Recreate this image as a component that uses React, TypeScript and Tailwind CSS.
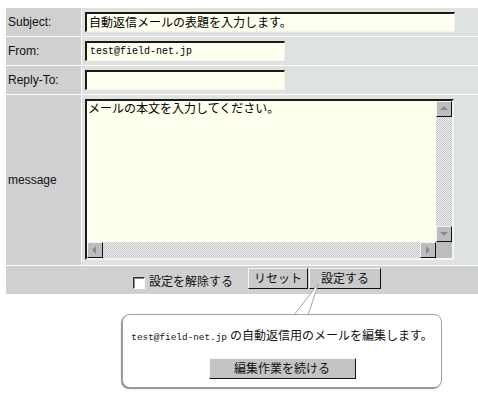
import React from "react";

const CJK = "font-['Liberation_Sans','Noto_Sans_CJK_JP',sans-serif]";
const MONO = "font-['Liberation_Mono','DejaVu_Sans_Mono',monospace]";

function Arrow({ dir }: { dir: "up" | "down" | "left" | "right" }) {
  const pts: Record<string, string> = {
    up: "4,9 8,5 12,9",
    down: "4,6 8,10 12,6",
    left: "9,4 5,8 9,12",
    right: "6,4 10,8 6,12",
  };
  return (
    <div className="w-[16px] h-[16px] shrink-0 bg-[#bdbdbd] border-t border-l border-t-[#f4f4f4] border-l-[#f4f4f4] border-r border-b border-r-[#111] border-b-[#111] flex items-center justify-center">
      <svg width="14" height="14" viewBox="1 1 14 14">
        <polygon points={pts[dir]} fill="#8a8a8a" />
      </svg>
    </div>
  );
}

const checker =
  "bg-[repeating-conic-gradient(#c4c4c4_0_25%,#f2f2f2_0_50%)] bg-[length:2px_2px]";

function Label({ children, tall }: { children: React.ReactNode; tall?: boolean }) {
  return (
    <div
      className={`bg-[#d0d0d0] flex items-center pl-[2px] text-[12px] text-[#111] ${
        tall ? "h-[170px]" : "h-[28px]"
      }`}
    >
      {children}
    </div>
  );
}

const inputCls =
  "h-[20px] bg-[#ffffef] border-t-2 border-l-2 border-t-[#1a1a1a] border-l-[#1a1a1a] border-r border-b border-r-[#f4f4f4] border-b-[#f4f4f4] flex items-center pl-[2px] outline-none";

export default function App() {
  return (
    <div className={`relative w-[478px] h-[404px] bg-white overflow-hidden ${CJK}`}>
      <div className="ml-[6px] pt-[8px] w-[472px] grid grid-cols-[75px_1fr] gap-px bg-white">
        <Label>Subject:</Label>
        <div className="bg-[#dfe3df] flex items-center pl-[3px]">
          <div className={`${inputCls} w-[370px] text-[12px] text-black`}>
            自動返信メールの表題を入力します。
          </div>
        </div>

        <Label>From:</Label>
        <div className="bg-[#dfe3df] flex items-center pl-[3px]">
          <div className={`${inputCls} w-[200px] text-[10px] text-black ${MONO} pl-[3px]`}>
            test@field-net.jp
          </div>
        </div>

        <Label>Reply-To:</Label>
        <div className="bg-[#dfe3df] flex items-center pl-[3px]">
          <div className={`${inputCls} w-[200px]`}></div>
        </div>

        <Label tall>message</Label>
        <div className="bg-[#dfe3df] flex items-start pl-[3px] pt-[4px]">
          <div className="w-[369px] h-[161px] flex flex-col bg-[#ffffef] border-t-2 border-l-2 border-t-[#1a1a1a] border-l-[#1a1a1a] border-r-2 border-b-2 border-r-[#f4f4f4] border-b-[#f4f4f4]">
            <div className="flex flex-1 min-h-0">
              <div className="flex-1 pl-[1px] pt-[1px] text-[12px] leading-[14px] text-black">
                メールの本文を入力してください。
              </div>
              <div className="w-[16px] flex flex-col">
                <Arrow dir="up" />
                <div className={`flex-1 ${checker}`} />
                <Arrow dir="down" />
              </div>
            </div>
            <div className="h-[16px] flex">
              <Arrow dir="left" />
              <div className={`flex-1 ${checker}`} />
              <Arrow dir="right" />
              <div className="w-[16px] bg-[#bdbdbd]" />
            </div>
          </div>
        </div>

        <div className="col-span-2 h-[28px] bg-[#d0d0d0] flex items-end pb-[5px] pl-[127px]">
          <div className="w-[12px] h-[12px] bg-white border-t border-l border-t-[#333] border-l-[#333] border-r border-b border-r-white border-b-white shadow-[inset_1px_1px_0_#888]" />
          <span className="ml-[4px] text-[12px] leading-[13px] text-[#111]">設定を解除する</span>
          <div className="ml-[15px] w-[60px] h-[21px] bg-[#cacaca] border-t border-l border-t-[#f4f4f4] border-l-[#f4f4f4] border-r border-b border-r-[#111] border-b-[#111] flex items-center justify-center text-[12px] text-[#111]">
            リセット
          </div>
          <div className="ml-[1px] w-[72px] h-[21px] bg-[#cacaca] border-t border-l border-t-[#f4f4f4] border-l-[#f4f4f4] border-r border-b border-r-[#111] border-b-[#111] flex items-center justify-center text-[12px] text-[#111]">
            設定する
          </div>
        </div>
      </div>

      {/* balloon tail */}
      <svg className="absolute left-0 top-0" width="478" height="404">
        <polygon points="294,316 318,284 308,316" fill="#fff" />
        <line x1="294" y1="315" x2="318" y2="284" stroke="#a8a8a8" strokeWidth="1" />
        <line x1="308" y1="315" x2="318.5" y2="284" stroke="#a8a8a8" strokeWidth="1" />
      </svg>

      {/* balloon */}
      <div className="absolute left-[122px] top-[314px] w-[320px] h-[74px] rounded-[8px] border border-[#a0a0a0] bg-white shadow-[-1px_1px_1px_rgba(0,0,0,0.45)] flex flex-col items-center pt-[14px]">
        <div className="text-[12px] leading-[14px] text-[#111] whitespace-nowrap">
          <span className={`${MONO} text-[9.4px]`}>test@field-net.jp</span>
          <span className="ml-[3px]">の自動返信用のメールを編集します。</span>
        </div>
        <div className="mt-[13px] w-[147px] h-[21px] bg-[#c4c4c4] border-t border-l border-t-[#f4f4f4] border-l-[#f4f4f4] border-r border-b border-r-[#111] border-b-[#111] flex items-center justify-center text-[12px] text-[#111]">
          編集作業を続ける
        </div>
      </div>
    </div>
  );
}
